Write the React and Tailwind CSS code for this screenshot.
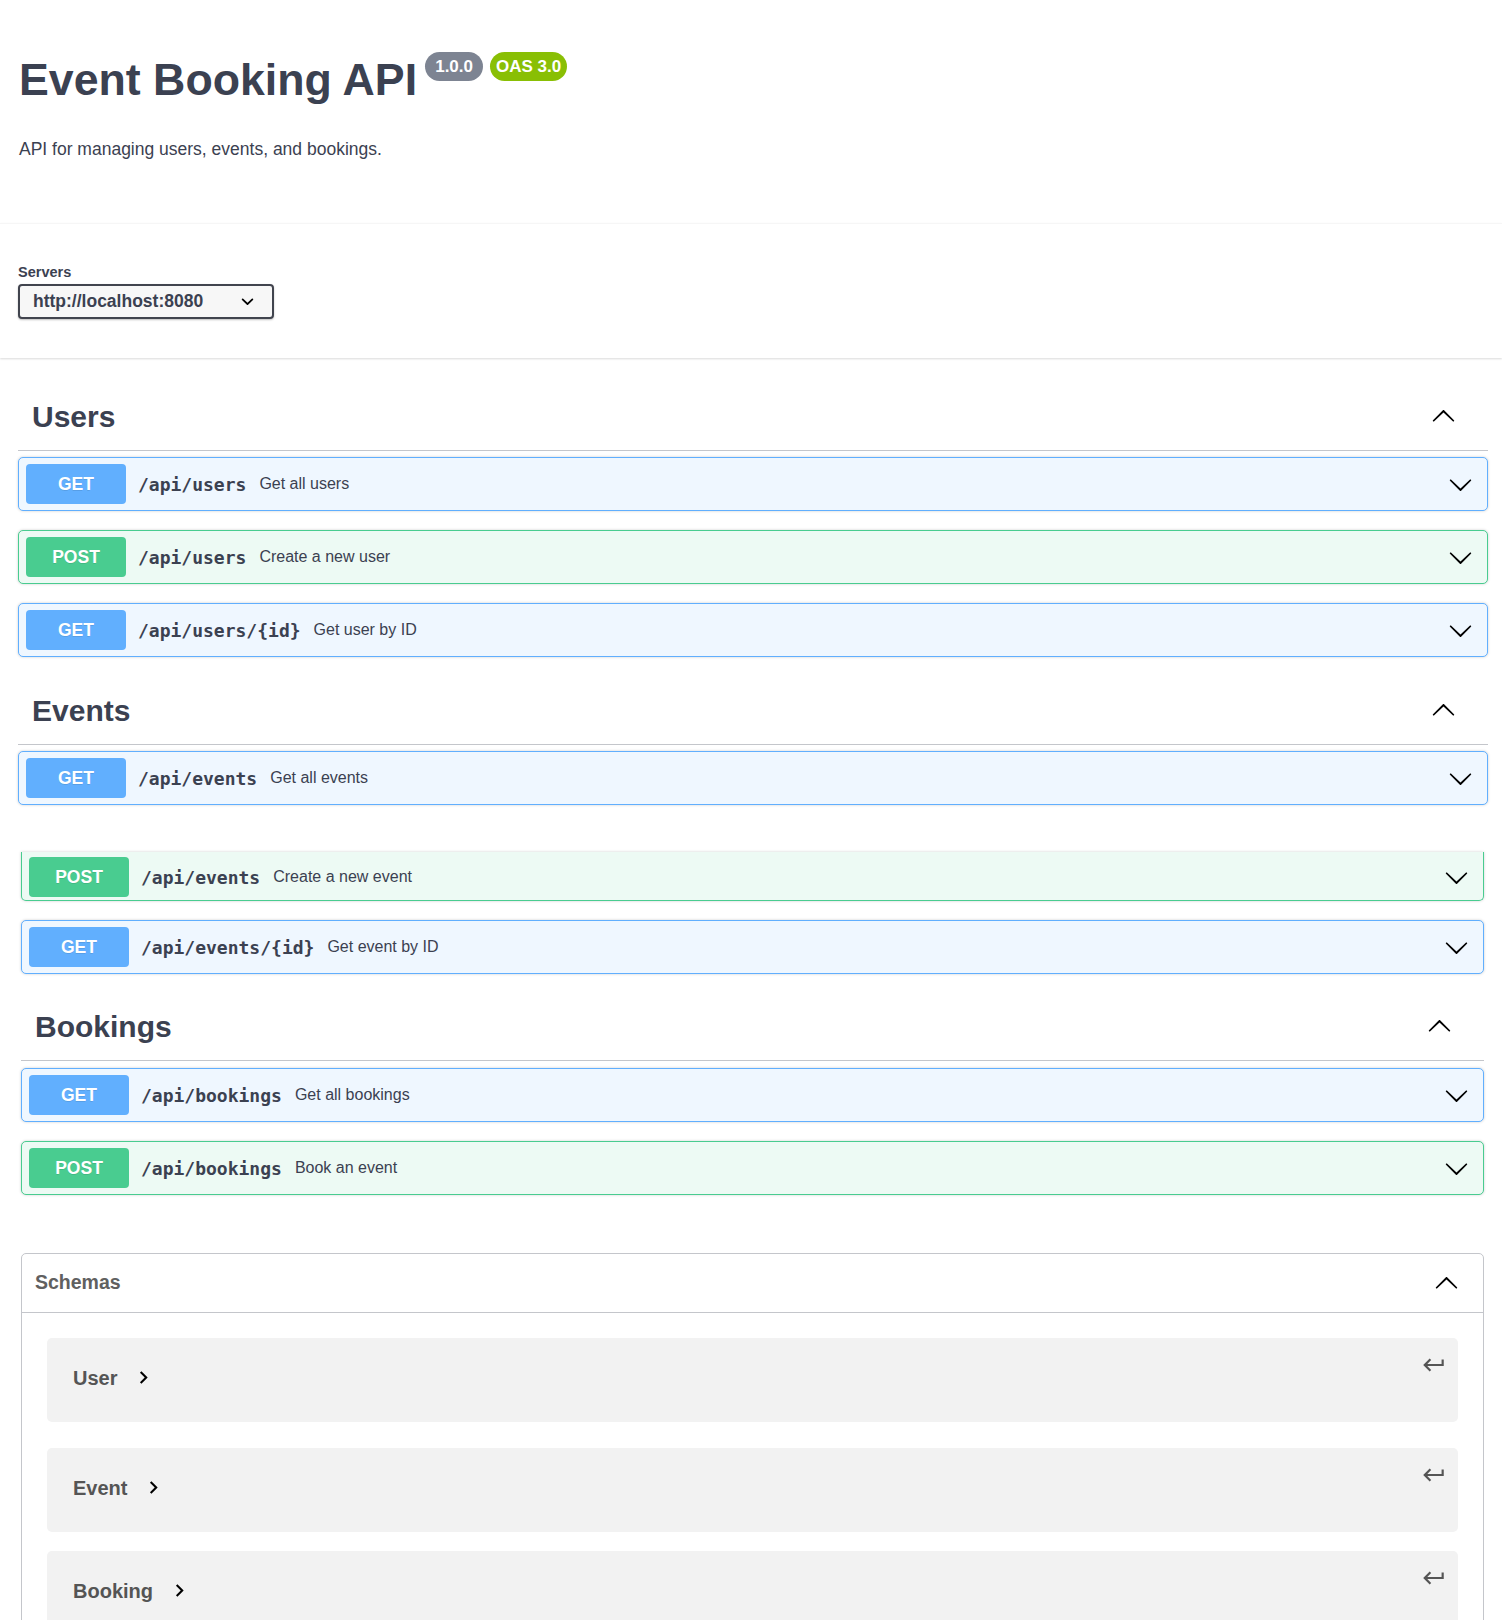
import React from 'react';

const METHOD = {
  GET: { row: 'bg-[#eff7ff] border-[#61affe]', badge: 'bg-[#61affe]' },
  POST: { row: 'bg-[#edfaf4] border-[#49cc90]', badge: 'bg-[#49cc90]' },
};

const ARROW =
  'M17.418 6.109c.272-.268.709-.268.979 0s.271.701 0 .969l-7.908 7.83c-.27.268-.707.268-.979 0l-7.908-7.83c-.27-.268-.27-.701 0-.969.271-.268.709-.268.979 0L10 13.25l7.418-7.141z';

function Arrow({ up = false }) {
  return (
    <svg viewBox="0 0 20 20" width="25" height="25" fill="currentColor" className={up ? 'rotate-180 text-black' : 'text-black'}>
      <path d={ARROW} />
    </svg>
  );
}

function Op({ method, path, summary, cut = false }) {
  const m = METHOD[method];
  return (
    <div
      className={`flex items-center rounded-[5px] border pl-[7px] pr-[14px] shadow-[0_0_3px_rgba(0,0,0,0.19)] ${m.row} ${
        cut ? 'h-[49px] border-t-0 rounded-t-none pt-[2px]' : 'h-[54px] mb-[19px]'
      }`}
    >
      <span
        className={`flex h-[40px] w-[100px] shrink-0 items-center justify-center rounded-[4px] text-[17.5px] font-bold text-white [text-shadow:0_1px_0_rgba(0,0,0,0.1)] ${m.badge}`}
      >
        {method}
      </span>
      <span className="ml-[12px] font-['DejaVu_Sans_Mono',monospace] text-[18px] font-bold text-[#3b4151]">{path}</span>
      <span className="ml-[13px] text-[16px] text-[#3b4151]">{summary}</span>
      <span className="ml-auto flex">
        <Arrow />
      </span>
    </div>
  );
}

function TagHead({ name, h = 'h-[69px]' }) {
  return (
    <div className={`flex items-center justify-between border-b border-[#c4c6cb] pl-[14px] pr-[32px] ${h}`}>
      <h3 className="text-[30px] font-bold text-[#3b4151]">{name}</h3>
      <Arrow up />
    </div>
  );
}

function Model({ name, className = '' }) {
  return (
    <div className={`flex h-[84px] justify-between rounded-[5px] bg-[#f2f2f2] pl-[26px] pr-[11px] ${className}`}>
      <div className="mt-[28px] flex h-[23px] items-center">
        <span className="text-[20px] font-bold text-[#555]">{name}</span>
        <svg viewBox="0 0 24 24" width="25" height="25" className="ml-[14px] text-black" fill="currentColor">
          <path d="M10 6L8.59 7.41 13.17 12l-4.58 4.59L10 18l6-6z" />
        </svg>
      </div>
      <svg viewBox="0 0 24 24" width="26" height="26" className="mt-[14px] text-[#555]" fill="currentColor">
        <path d="M19 7v4H5.83l3.58-3.59L8 6l-6 6 6 6 1.41-1.41L5.83 13H21V7z" />
      </svg>
    </div>
  );
}

export default function App() {
  return (
    <div className="min-h-[1620px] bg-white font-['Liberation_Sans',Arial,sans-serif] text-[#3b4151]">
      <header className="h-[223px] pl-[19px] pt-[52px]">
        <div className="flex items-start">
          <h1 className="mt-[5px] text-[44.7px] font-bold leading-[45px]">Event Booking API</h1>
          <span className="ml-[8px] flex h-[29px] w-[58px] items-center justify-center rounded-full bg-[#7d8492] text-[17px] font-bold text-white">
            1.0.0
          </span>
          <span className="ml-[7px] flex h-[29px] w-[77px] items-center justify-center rounded-full bg-[#89bf04] text-[17px] font-bold text-white">
            OAS 3.0
          </span>
        </div>
        <p className="mt-[37px] text-[17.5px] leading-[20px]">API for managing users, events, and bookings.</p>
      </header>

      <section className="h-[135px] border-t border-[#f6f6f6] pl-[18px] pt-[40px] shadow-[0_1px_2px_0_rgba(0,0,0,0.15)]">
        <div className="text-[14.5px] font-bold leading-[17px]">Servers</div>
        <div className="mt-[3px] flex h-[35px] w-[256px] items-center justify-between rounded-[4px] border-2 border-[#41444e] bg-[#f7f7f7] pl-[13px] pr-[12px] shadow-[0_1px_2px_0_rgba(0,0,0,0.25)]">
          <span className="text-[17.5px] font-bold">http://localhost:8080</span>
          <svg viewBox="0 0 20 20" width="25" height="25" fill="currentColor" className="text-black">
            <path d="M13.418 7.859a.695.695 0 01.978 0 .68.68 0 010 .969l-3.908 3.83a.697.697 0 01-.979 0l-3.908-3.83a.68.68 0 010-.969.695.695 0 01.978 0L10 11z" />
          </svg>
        </div>
      </section>

      <div className="ml-[18px] mt-[24px] w-[1470px]">
        <TagHead name="Users" />
        <div className="mt-[6px]">
          <Op method="GET" path="/api/users" summary="Get all users" />
          <Op method="POST" path="/api/users" summary="Create a new user" />
          <Op method="GET" path="/api/users/{id}" summary="Get user by ID" />
        </div>
        <TagHead name="Events" />
        <div className="mt-[6px]">
          <Op method="GET" path="/api/events" summary="Get all events" />
        </div>
      </div>

      <div className="ml-[21px] mt-[47px] w-[1463px]">
        <div className="mb-[19px]">
          <Op method="POST" path="/api/events" summary="Create a new event" cut />
        </div>
        <div className="mb-[-1px]">
          <Op method="GET" path="/api/events/{id}" summary="Get event by ID" />
        </div>
        <TagHead name="Bookings" h="h-[69px]" />
        <div className="mt-[7px]">
          <Op method="GET" path="/api/bookings" summary="Get all bookings" />
          <Op method="POST" path="/api/bookings" summary="Book an event" />
        </div>

        <section className="mt-[58px] rounded-[5px] border border-[#c4c6cb] pb-[20px]">
          <div className="flex h-[59px] items-center justify-between border-b border-[#c4c6cb] pl-[13px] pr-[24px]">
            <h4 className="text-[19.5px] font-bold text-[#606060]">Schemas</h4>
            <Arrow up />
          </div>
          <div className="px-[25px] pt-[25px]">
            <Model name="User" className="h-[83px]" />
            <Model name="Event" className="mt-[26px]" />
            <Model name="Booking" className="mt-[19px]" />
          </div>
        </section>
      </div>
    </div>
  );
}
